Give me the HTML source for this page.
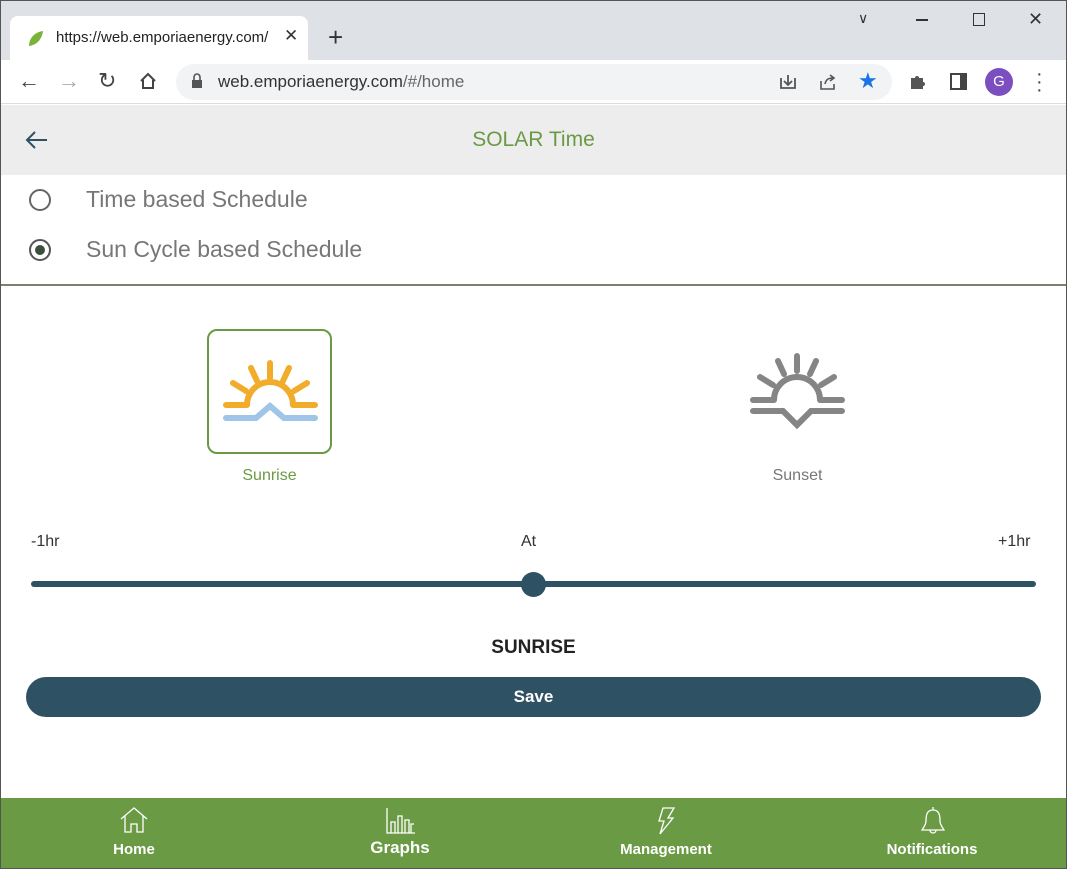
<!DOCTYPE html>
<html><head><meta charset="utf-8"><style>
*{margin:0;padding:0;box-sizing:border-box}
body{width:1067px;height:869px;overflow:hidden;font-family:"Liberation Sans",sans-serif;background:#fff;position:relative}
.abs{position:absolute}
</style></head><body>
<div class="abs" style="left:0;top:0;width:1067px;height:869px;border:1px solid #555;z-index:10;pointer-events:none"></div>
<!-- tab bar -->
<div class="abs" style="left:0;top:0;width:1067px;height:60px;background:#dee1e6"></div>
<div class="abs" style="left:10px;top:16px;width:298px;height:46px;background:#fff;border-radius:8px 8px 0 0"></div>
<svg class="abs" style="left:26px;top:29px" width="20" height="20"><path d="M3 17 C3 9 9 3 17 2 C16 10 11 16 3 17Z" fill="#7bb33a"/></svg>
<div class="abs" style="left:56px;top:29px;font-size:15px;color:#222">https://web.emporiaenergy.com/</div>
<div class="abs" style="left:284px;top:26px;font-size:17px;color:#333">✕</div>
<div class="abs" style="left:328px;top:22px;font-size:26px;color:#333">+</div>
<div class="abs" style="left:858px;top:10px;font-size:14px;color:#333">∨</div>
<div class="abs" style="left:916px;top:19px;width:12px;height:1.5px;background:#333"></div>
<div class="abs" style="left:973px;top:13px;width:12px;height:13px;border:1.5px solid #333"></div>
<div class="abs" style="left:1028px;top:9px;font-size:18px;color:#333">✕</div>
<!-- toolbar -->
<div class="abs" style="left:0;top:60px;width:1067px;height:44px;background:#fff;border-bottom:1px solid #ddd"></div>
<div class="abs" style="left:18px;top:68px;font-size:22px;color:#444">←</div>
<div class="abs" style="left:58px;top:68px;font-size:22px;color:#aaa">→</div>
<div class="abs" style="left:98px;top:68px;font-size:22px;color:#444">↻</div>
<svg class="abs" style="left:139px;top:72px" width="18" height="18"><path d="M2 9 L9 2 L16 9 M4 8 V16 H14 V8" fill="none" stroke="#444" stroke-width="2"/></svg>
<div class="abs" style="left:176px;top:64px;width:716px;height:36px;background:#f1f3f4;border-radius:18px"></div>
<svg class="abs" style="left:191px;top:73px" width="12" height="16"><rect x="1" y="7" width="10" height="8" fill="#555"/><path d="M3 7 V4 a3 3 0 0 1 6 0 V7" fill="none" stroke="#555" stroke-width="1.6"/></svg>
<div class="abs" style="left:218px;top:72px;font-size:17px;color:#333">web.emporiaenergy.com<span style="color:#666">/#/home</span></div>
<svg class="abs" style="left:778px;top:72px" width="20" height="20"><path d="M3 6 V16 H17 V6 M10 3 V12 M6 9 L10 13 L14 9" fill="none" stroke="#555" stroke-width="1.8"/></svg>
<svg class="abs" style="left:818px;top:72px" width="20" height="20"><path d="M3 9 V17 H16 V12 M7 12 C8 7 11 6 15 6 M12 3 L16 6 L12 9" fill="none" stroke="#555" stroke-width="1.6"/></svg>
<div class="abs" style="left:858px;top:68px;font-size:22px;color:#1a73e8">★</div>
<svg class="abs" style="left:908px;top:72px" width="20" height="20"><path d="M3 6 H7 a2 2 0 0 1 4 0 H15 V10 a2 2 0 0 1 0 4 V17 H3Z" fill="#555"/></svg>
<div class="abs" style="left:950px;top:73px;width:17px;height:17px;border:2px solid #444;border-right-width:7px"></div>
<div class="abs" style="left:985px;top:68px;width:28px;height:28px;border-radius:50%;background:#7b4fbf;color:#fff;font-size:15px;text-align:center;line-height:28px">G</div>
<div class="abs" style="left:1036px;top:70px;font-size:20px;color:#444;line-height:8px;width:4px">·<br>·<br>·</div>
<!-- header -->
<div class="abs" style="left:0;top:105px;width:1067px;height:70px;background:#ededee"></div>
<svg class="abs" style="left:25px;top:130px" width="24" height="20" fill="none" stroke="#2e5163" stroke-width="2"><path d="M22 10 H3 M10 2 L2 10 L10 18"/></svg>
<div class="abs" style="left:0;top:128px;width:1067px;text-align:center;font-size:21px;color:#6a9a44">SOLAR Time</div>
<!-- radios -->
<div class="abs" style="left:29px;top:189px;width:22px;height:22px;border-radius:50%;border:2px solid #666"></div>
<div class="abs" style="left:86px;top:186px;font-size:23px;color:#777">Time based Schedule</div>
<div class="abs" style="left:29px;top:239px;width:22px;height:22px;border-radius:50%;border:2px solid #555"><div style="margin:4px;width:10px;height:10px;border-radius:50%;background:#3c4f3c"></div></div>
<div class="abs" style="left:86px;top:236px;font-size:23px;color:#777">Sun Cycle based Schedule</div>
<div class="abs" style="left:0;top:284px;width:1067px;height:2px;background:#7d7f72"></div>
<!-- sunrise box -->
<div class="abs" style="left:207px;top:329px;width:125px;height:125px;border:2px solid #6a9a44;border-radius:10px"></div>
<svg class="abs" style="left:200px;top:340px" width="140" height="100" stroke-linecap="round" fill="none">
<g stroke="#f0ac2a" stroke-width="6">
<path d="M47 65 A23 23 0 0 1 93 65"/>
<path d="M70 23 V38 M51 28 L57 41 M89 28 L83 41 M33 43 L46 51 M107 43 L94 51 M26 65 H46 M94 65 H115"/>
</g>
<path d="M26 78 H56 L70 66 L84 78 H115" stroke="#9fc5e8" stroke-width="6"/>
</svg>
<div class="abs" style="left:207px;top:467px;width:125px;text-align:center;font-size:16px;color:#6a9a44">Sunrise</div>
<!-- sunset -->
<svg class="abs" style="left:727px;top:340px" width="140" height="100" stroke-linecap="round" fill="none">
<g stroke="#858585" stroke-width="6">
<path d="M47 60 A23 23 0 0 1 93 60"/>
<path d="M70 16 V31 M51 21 L57 34 M89 21 L83 34 M33 37 L46 45 M107 37 L94 45 M26 60 H46 M94 60 H115"/>
<path d="M26 71 H56 L70 85 L84 71 H115"/>
</g>
</svg>
<div class="abs" style="left:735px;top:467px;width:125px;text-align:center;font-size:16px;color:#777">Sunset</div>
<!-- slider -->
<div class="abs" style="left:31px;top:533px;font-size:16px;color:#333">-1hr</div>
<div class="abs" style="left:521px;top:533px;font-size:16px;color:#333">At</div>
<div class="abs" style="left:998px;top:533px;font-size:16px;color:#333">+1hr</div>
<div class="abs" style="left:31px;top:581px;width:1005px;height:6px;border-radius:3px;background:#2e5163"></div>
<div class="abs" style="left:521px;top:572px;width:25px;height:25px;border-radius:50%;background:#2e5163"></div>
<div class="abs" style="left:0;top:637px;width:1067px;text-align:center;font-size:19px;font-weight:bold;color:#222">SUNRISE</div>
<div class="abs" style="left:26px;top:677px;width:1015px;height:40px;border-radius:20px;background:#2e5163;color:#fff;text-align:center;line-height:40px;font-size:17px;font-weight:bold">Save</div>
<!-- bottom nav -->
<div class="abs" style="left:0;top:798px;width:1067px;height:71px;background:#6a9a44"></div>
<svg class="abs" style="left:119px;top:806px" width="30" height="28" fill="none" stroke="#fff" stroke-width="1.3"><path d="M2 13 L15 2 L28 13 M6 10 V26 H12 V18 H18 V26 H24 V10"/></svg>
<div class="abs" style="left:84px;top:841px;width:100px;text-align:center;font-size:15px;font-weight:bold;color:#fff">Home</div>
<svg class="abs" style="left:385px;top:806px" width="32" height="28" fill="none" stroke="#fff" stroke-width="1.3"><path d="M2 2 V27 H30 M6 27 V16 H10 V27 M13 27 V10 H17 V27 M20 27 V14 H24 V27 M26 27 V18 H29"/></svg>
<div class="abs" style="left:350px;top:838px;width:100px;text-align:center;font-size:17px;font-weight:bold;color:#fff">Graphs</div>
<svg class="abs" style="left:654px;top:806px" width="24" height="30" fill="none" stroke="#fff" stroke-width="1.3"><path d="M9 2 H20 L14 12 H19 L6 28 L10 15 H5Z"/></svg>
<div class="abs" style="left:606px;top:841px;width:120px;text-align:center;font-size:15px;font-weight:bold;color:#fff">Management</div>
<svg class="abs" style="left:919px;top:805px" width="28" height="30" fill="none" stroke="#fff" stroke-width="1.3"><path d="M14 2 V5 M14 5 C8 5 7 10 7 16 C7 20 4 23 3 25 H25 C24 23 21 20 21 16 C21 10 20 5 14 5 M11 25 C11 29 17 29 17 25"/></svg>
<div class="abs" style="left:872px;top:841px;width:120px;text-align:center;font-size:15px;font-weight:bold;color:#fff">Notifications</div>
</body></html>
